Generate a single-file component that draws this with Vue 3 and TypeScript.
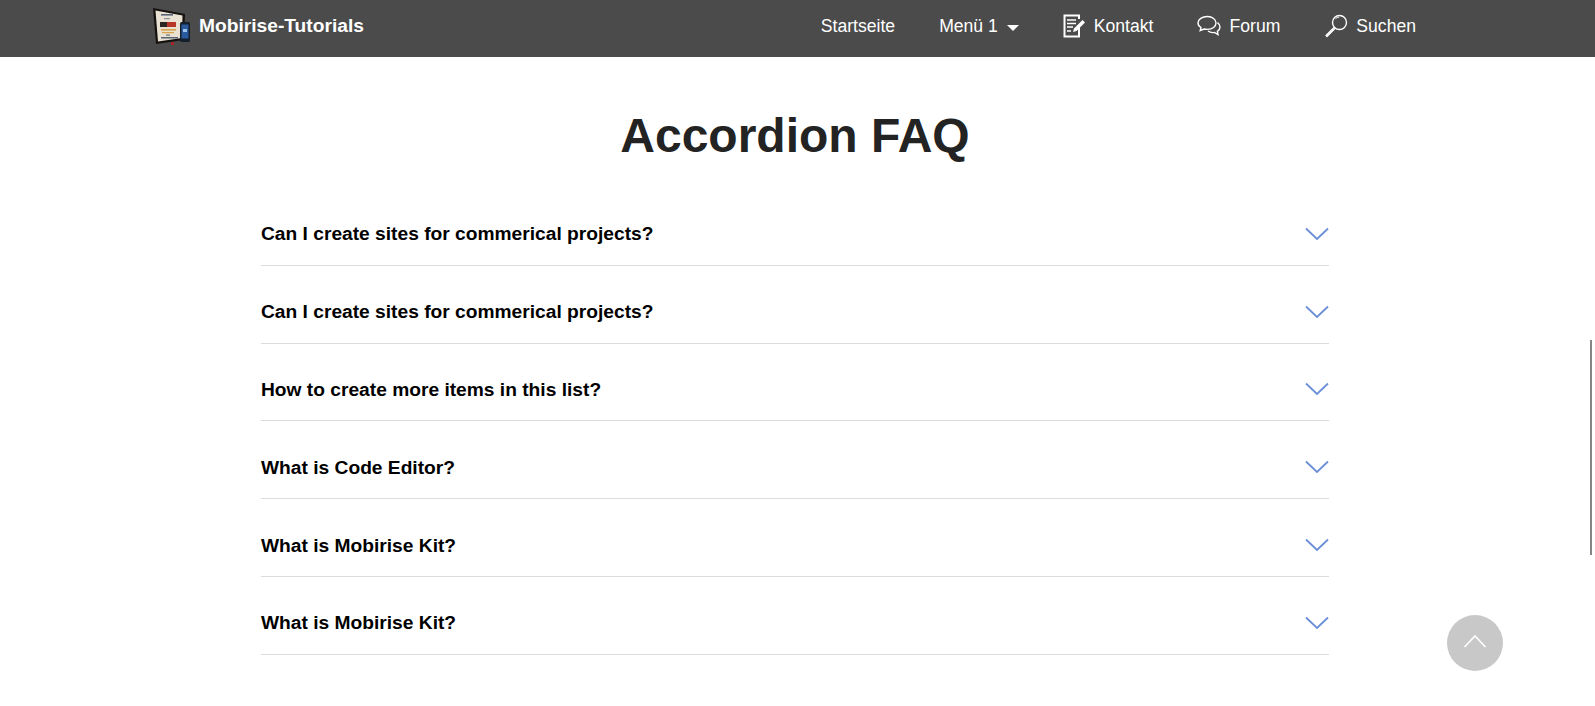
<script setup lang="ts">
const items: string[] = [
  'Can I create sites for commerical projects?',
  'Can I create sites for commerical projects?',
  'How to create more items in this list?',
  'What is Code Editor?',
  'What is Mobirise Kit?',
  'What is Mobirise Kit?',
]
</script>

<template>
  <div class="page">
    <header class="nav">
      <div class="brand">
        <svg class="logo" width="40" height="40" viewBox="0 0 40 40">
          <path d="M2 2 L34 8 L33 34 L5 38 Z" fill="#15110f" />
          <path d="M4.5 4.5 L31.5 9.5 L31 32 L7 35.5 Z" fill="#e9e2d2" />
          <rect x="10" y="8" width="12" height="1.6" fill="#5a6478" />
          <rect x="13" y="12" width="6" height="1.2" fill="#8a90a0" />
          <rect x="9" y="16" width="7" height="5" fill="#2b2622" />
          <rect x="16" y="16" width="9" height="5" fill="#b8352a" />
          <rect x="10" y="23" width="15" height="1.6" fill="#d8a24a" />
          <rect x="11" y="26" width="12" height="1.2" fill="#d8a24a" />
          <rect x="15" y="28.5" width="4" height="1.1" fill="#666" />
          <rect x="10" y="31" width="17" height="1.5" fill="#5a6478" />
          <rect x="20" y="36" width="3" height="3" fill="#a9222a" />
          <rect x="29" y="16" width="10" height="20" rx="1.5" fill="#151f2c" />
          <rect x="30.5" y="18.5" width="7" height="14" fill="#2a5a9e" />
          <rect x="32" y="23" width="4" height="3" fill="#9cc4ee" />
        </svg>
        <span class="brand-text">Mobirise-Tutorials</span>
      </div>
      <nav class="links">
        <a class="link">Startseite</a>
        <a class="link">Menü 1<span class="caret"></span></a>
        <a class="link">
          <svg width="23" height="24" viewBox="0 0 23 24" fill="none" stroke="#fff">
            <path d="M16 11 V22.5 H1.5 V1.5 H16 V5" stroke-width="2" />
            <path d="M4 6 H13 M4 9.5 H13 M4 13 H10 M4 17 H8" stroke-width="1.6" />
            <path d="M10 18 L11 14.5 L19.5 6 L22 8.5 L13.5 17 Z" fill="#fff" stroke="none" />
          </svg>
          Kontakt
        </a>
        <a class="link">
          <svg width="24" height="22" viewBox="0 0 24 22" fill="none" stroke="#fff" stroke-width="1.4">
            <path d="M10.5 1.5 C5 1.5 1 4.5 1 8 C1 10 2.2 11.5 4 12.6 L3.2 15.5 L7.2 14 C8.3 14.3 9.4 14.4 10.5 14.4 C15.5 14.4 19 11.5 19 8 C19 4.5 15.5 1.5 10.5 1.5 Z" />
            <path d="M20.5 7.5 C22.3 9 23 10.5 23 12 C23 14 21.8 15.4 20.4 16.3 L21 19.5 L17.5 17.4 C15.5 17.8 13 17.5 11 16" />
          </svg>
          Forum
        </a>
        <a class="link">
          <svg width="24" height="24" viewBox="0 0 24 24" fill="none" stroke="#fff">
            <circle cx="15.5" cy="8.5" r="7" stroke-width="1.4" />
            <path d="M11.5 4.8 C12.5 3.8 13.8 3.3 15.2 3.3" stroke-width="1" />
            <path d="M10 13.5 L2 21.5 L3 22.5 L11 14.5 Z" stroke-width="1.3" stroke-linejoin="round" />
          </svg>
          Suchen
        </a>
      </nav>
    </header>

    <main class="content">
      <h1 class="title">Accordion FAQ</h1>
      <div class="accordion">
        <div v-for="(item, i) in items" :key="i" class="row">
          <span class="question">{{ item }}</span>
          <svg class="chevron" width="24" height="14" viewBox="0 0 24 14" fill="none" stroke="#6a8fd8" stroke-width="1.8">
            <path d="M1 1.5 L12 12 L23 1.5" />
          </svg>
        </div>
      </div>
    </main>

    <div class="scrollbar"></div>
    <button class="to-top" type="button" aria-label="Nach oben">
      <svg width="24" height="14" viewBox="0 0 24 14" fill="none" stroke="#fff" stroke-width="1.6">
        <path d="M1.5 13 L12 2 L22.5 13" />
      </svg>
    </button>
  </div>
</template>

<style>
html, body { margin: 0; background: #fff; overflow: hidden; }
</style>

<style scoped>
.page {
  position: relative;
  width: 1595px;
  height: 706px;
  overflow: hidden;
  font-family: "Liberation Sans", Arial, sans-serif;
  background: #fff;
}
.nav {
  height: 57px;
  background: #4b4b4b;
  display: flex;
  align-items: center;
  justify-content: space-between;
  padding: 0 179px 5px 151px;
  box-sizing: border-box;
}
.brand { display: flex; align-items: center; gap: 8px; }
.logo { display: block; }
.brand-text { color: #fff; font-weight: 700; font-size: 19.2px; }
.links { display: flex; align-items: center; gap: 44px; height: 100%; }
.link {
  display: flex;
  align-items: center;
  gap: 8px;
  color: #fff;
  font-size: 17.6px;
}
.caret {
  width: 0;
  height: 0;
  border-left: 6px solid transparent;
  border-right: 6px solid transparent;
  border-top: 6px solid #fff;
  margin-left: 1px;
  margin-top: 3px;
}
.content {
  display: flex;
  flex-direction: column;
  align-items: center;
  width: 1590px;
}
.title {
  margin: 50px 0 23px;
  font-size: 48px;
  line-height: 58px;
  font-weight: 700;
  color: #232323;
}
.accordion { width: 1068px; }
.row {
  height: 77.8px;
  box-sizing: border-box;
  display: flex;
  align-items: center;
  justify-content: space-between;
  border-bottom: 1px solid #dcdcdc;
  padding-top: 16px;
}
.question {
  font-size: 19.2px;
  font-weight: 700;
  color: #000;
}
.chevron { display: block; margin-top: -1px; }
.scrollbar {
  position: absolute;
  left: 1590px;
  top: 340px;
  width: 2px;
  height: 215px;
  background: #858585;
}
.to-top {
  position: absolute;
  left: 1447px;
  top: 615px;
  width: 56px;
  height: 56px;
  border: none;
  padding: 0 0 4px;
  border-radius: 50%;
  background: #c8c8c8;
  display: flex;
  align-items: center;
  justify-content: center;
}
</style>
